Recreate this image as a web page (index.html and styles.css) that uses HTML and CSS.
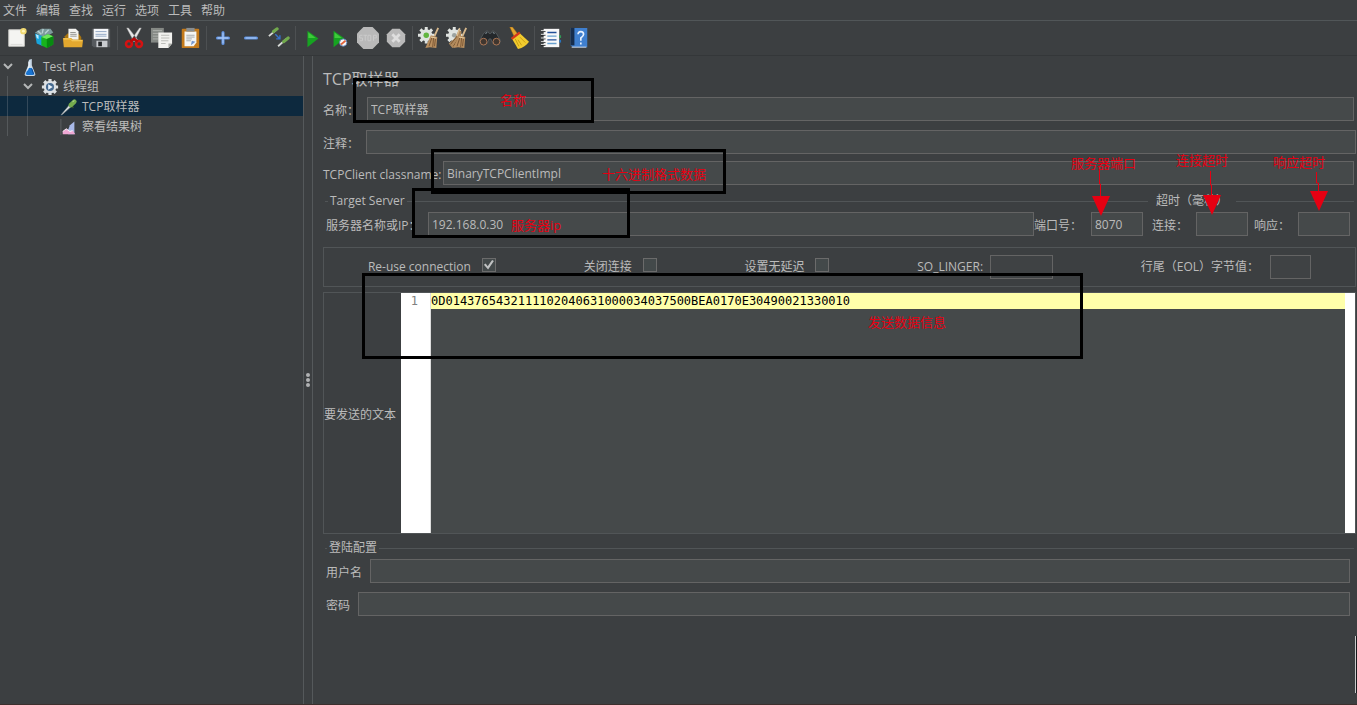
FILE: index.html
```html
<!DOCTYPE html>
<html lang="zh-CN">
<head>
<meta charset="utf-8">
<title>TCP取样器</title>
<link rel="stylesheet" href="styles.css">
</head>
<body>
<div class="app">
  <nav class="menubar">
    <button>文件</button><button>编辑</button><button>查找</button><button>运行</button><button>选项</button><button>工具</button><button>帮助</button>
  </nav>

  <div class="toolbar">
    <button aria-label="新建"><svg viewBox="0 0 24 24"><path d="M3 3h17v18H3z" fill="#f4f4f2" stroke="#cfcfcb"/><path d="M5 19h13" stroke="#dcdcd8"/><circle cx="19" cy="4.500" r="3.500" fill="#f0d870"/><circle cx="19" cy="4.500" r="1.600" fill="#fff6b8"/></svg></button>
    <button aria-label="模板"><svg viewBox="0 0 24 24"><path d="M1 6l7-4 10 0 3 4-10 6z" fill="#7d9a9c"/><path d="M4 4l4 4M10 2l-1 5M16 3l-4 4" stroke="#b8d0d4" stroke-width="1.500"/><path d="M1 7l9 3v11l-7-3z" fill="#18a4dc"/><path d="M2 8l3 1v4l-2-1z" fill="#bcecff"/><path d="M8 11l7-3 6 2v9l-7 4-6-3z" fill="#18b41c"/><path d="M8 11l7-3 6 2-7 3z" fill="#6fe65a"/><path d="M14 13l7-3v9l-7 4z" fill="#078a10"/></svg></button>
    <button aria-label="打开"><svg viewBox="0 0 24 24"><path d="M3 10l3-3h12l3 4v9H3z" fill="#a87410"/><path d="M7 2h8l3 3v9H7z" fill="#f3f3f1"/><path d="M9 6h6M9 8h7M9 10h7" stroke="#90918c"/><path d="M1 12h9l2 2h11l-1 8H2z" fill="#e3a82e"/><path d="M2 13h7l2 2h11" stroke="#f8d26a" fill="none"/></svg></button>
    <button aria-label="保存"><svg viewBox="0 0 24 24"><path d="M2 2h20v20H4l-2-2z" fill="#565a5e"/><path d="M4 2h16v11H4z" fill="#f5f7fa"/><path d="M6 5h12M6 8h12M6 10h12" stroke="#8ba3c2"/><path d="M7 15h12v7H7z" fill="#c9ccd0"/><path d="M9 16h4v5H9z" fill="#24272a"/></svg></button>
    <span class="sep"></span>
    <button aria-label="剪切"><svg viewBox="0 0 24 24"><path d="M4 1l2 0 10 13-4 2zM20 1l-2 0-9 13 3 2z" fill="#e8e8e8" stroke="#999" stroke-width=".5"/><circle cx="6.500" cy="18.500" r="3.200" fill="none" stroke="#d51212" stroke-width="2.800"/><circle cx="17.500" cy="18.500" r="3.200" fill="none" stroke="#d51212" stroke-width="2.800"/><path d="M8 16l4-3 4 3" stroke="#b80808" stroke-width="3" fill="none"/></svg></button>
    <button aria-label="复制"><svg viewBox="0 0 24 24"><path d="M0 1h14v16H0z" fill="#858985"/><path d="M2 4h10M2 7h6M2 10h6M2 13h6" stroke="#b1b3b0"/><path d="M8 6h15v12l-4 5H8z" fill="#f2f2ef"/><path d="M11 9h9M11 12h9M11 15h8M11 18h5" stroke="#b7b8b3"/><path d="M23 18h-4v5z" fill="#aaaca7"/></svg></button>
    <button aria-label="粘贴"><svg viewBox="0 0 24 24"><rect x="3" y="2" width="19" height="21" rx="1" fill="#c47a1b"/><path d="M6 5h13v12l-3 4H6z" fill="#f5f5f3"/><path d="M8 9h9M8 11h9M8 13h6M8 15h5" stroke="#a2a6aa"/><path d="M8 1h9v4H8z" fill="#888d90"/><path d="M13 20l1-5 4 1" fill="#7597cf"/></svg></button>
    <span class="sep"></span>
    <button aria-label="展开"><svg viewBox="0 0 24 24"><path d="M12 6v12M6 12h12" stroke="#5d8fdc" stroke-width="3.400" stroke-linecap="round"/><path d="M12 6v12M6 12h12" stroke="#a7c8f8" stroke-width="1.400"/></svg></button>
    <button aria-label="折叠"><svg viewBox="0 0 24 24"><path d="M6 12h12" stroke="#5d8fdc" stroke-width="3.400" stroke-linecap="round"/><path d="M6 12h12" stroke="#a7c8f8" stroke-width="1.400"/></svg></button>
    <button aria-label="切换"><svg viewBox="0 0 24 24"><path d="M1 10l8-7M11 21l9-8" stroke="#d7dbd7" stroke-width="2"/><path d="M6 5l4-3M17 16l5-4" stroke="#72a94d" stroke-width="3.400" stroke-linecap="round"/><path d="M8 8l5 5M13 9v4H9" stroke="#3872cb" stroke-width="1.500" fill="none"/></svg></button>
    <span class="sep"></span>
    <button aria-label="启动"><svg viewBox="0 0 24 24"><path d="M7 4l12 8.500L7 22z" fill="#16a321"/><path d="M8 6l8 6H8z" fill="#3fca3b"/></svg></button>
    <button aria-label="无停顿启动"><svg viewBox="0 0 24 24"><path d="M5 4l12 8.500L5 22z" fill="#16a321"/><path d="M6 6l8 6H6z" fill="#3fca3b"/><circle cx="15.500" cy="17" r="4" fill="#f7f7f7" stroke="#5979ae"/><path d="M13 19l5-4" stroke="#e2643b" stroke-width="2"/></svg></button>
    <button aria-label="停止"><svg viewBox="0 0 24 24"><path d="M7 0h10l7 7v10l-7 7H7l-7-7V7z" fill="#b9b9b9"/><path d="M6 9H3v3h3v3H3M7 9h4M9 9v6M12 9h3v6h-3zM18 15V9h3v3h-3" stroke="#cccccc" fill="none"/></svg></button>
    <button aria-label="关闭"><svg viewBox="0 0 24 24"><path d="M8 2h8l6 6v8l-6 6H8l-6-6V8z" fill="#b9b9b9"/><path d="M8 8l8 8M16 8l-8 8" stroke="#dedede" stroke-width="3"/></svg></button>
    <span class="sep"></span>
    <button aria-label="清除"><svg viewBox="0 0 24 24"><use href="#cog"/><circle cx="9" cy="9" r="3" fill="#62b640"/><use href="#brush"/></svg></button>
    <button aria-label="清除全部"><svg viewBox="0 0 24 24"><use href="#cog"/><path d="M14 3l-4 9-7 6 4 5 8-4 2-14z" fill="#b08a5d"/><path d="M12 10l-7 9M14 12l-6 9" stroke="#76522d"/><path d="M15 1l-3 9" stroke="#d8b98c" stroke-width="1.500"/><use href="#brush"/></svg></button>
    <span class="sep"></span>
    <button aria-label="查找"><svg viewBox="0 0 24 24"><path d="M5 7l4-3 2 3h2l2-3 4 3 5 9-9 2-2-5h-2l-2 5-9-2z" fill="#24282b" stroke="#5d6366" stroke-width=".8"/><circle cx="5" cy="16" r="3.700" fill="#40362f" stroke="#b47c59"/><circle cx="19" cy="16" r="3.700" fill="#40362f" stroke="#b47c59"/><path d="M7 7l2-1M15 6l2 1" stroke="#9fb0b8"/></svg></button>
    <button aria-label="重置查找"><svg viewBox="0 0 24 24"><path d="M3 0l3 0 6 8-4 3z" fill="#e2a431" stroke="#9c6510" stroke-width=".5"/><path d="M5 12l8-6 11 10q-4 6-12 8z" fill="#f1cb2d"/><path d="M12 14l4 6M14 11l6 6M9 13l4 8" stroke="#c79a12"/><path d="M5 13l9-7" stroke="#d53719" stroke-width="2.500"/></svg></button>
    <span class="sep"></span>
    <button aria-label="函数助手"><svg viewBox="0 0 24 24"><path d="M4 2h17v20H4z" fill="#f8f8f8"/><path d="M8 6h10M8 14h10" stroke="#234f98" stroke-width="1.500"/><path d="M8 10h10M8 18h10" stroke="#68a1cf" stroke-width="1.500"/><path d="M1 5h5M1 9h5M1 13h5M1 17h5M1 20h5" stroke="#1d2022"/><path d="M1 4h4M1 8h4M1 12h4M1 16h4M1 19h4" stroke="#eee"/><path d="M21 9h2v3h-2z" fill="#309956"/><path d="M21 14h2v3h-2z" fill="#2874be"/></svg></button>
    <button aria-label="帮助"><svg viewBox="0 0 24 24"><path d="M3 1h18v21H5l-2-2z" fill="#3f7fce"/><path d="M3 1h4v19H3z" fill="#162d4c"/><path d="M4 22h16" stroke="#e0e8f0"/><path d="M11 8q0-3 3-3t3 3q0 2-3 4v3M14 17v2" stroke="#e8f2ff" stroke-width="1.800" fill="none"/></svg></button>
  </div>

  <div class="workspace">
    <aside class="sidebar">
      <ul class="tree">
        <li><button class="node level-1"><svg class="chevron" viewBox="0 0 10 10"><path d="M1 2l4 4 4-4"/></svg><svg class="icon" viewBox="0 0 18 20"><path d="M8 2l3-1v7l4 10q0 2-2 2H5q-2 0-2-2l4-10V5z" fill="#c9d9e8"/><path d="M7 11h4l3 7-2 1H6l-2-1z" fill="#1974d0"/><path d="M8 4v5l-2 5" stroke="#fff" fill="none"/><path d="M11 12l2 6" stroke="#0b448f"/></svg>Test Plan</button></li>
        <li><button class="node level-2"><svg class="chevron" viewBox="0 0 10 10"><path d="M1 2l4 4 4-4"/></svg><svg class="icon" viewBox="0 0 20 20"><path d="M10 1v18M1 10h18M3.600 3.600l12.800 12.800M16.400 3.600L3.600 16.400" stroke="#dde1e4" stroke-width="3.600"/><circle cx="10" cy="10" r="7" fill="#dde1e4"/><circle cx="10" cy="10" r="4.500" fill="#466a90"/><path d="M8 7l5 3-5 3z" fill="#e8f2fa"/></svg>线程组</button></li>
        <li><button class="node level-3 selected"><svg class="icon" viewBox="0 0 20 20"><path d="M1 19l10-12 2 2-10 9z" fill="#e0e5e5" stroke="#82898c" stroke-width=".7"/><path d="M10 6l5 5" stroke="#344f2c" stroke-width="2"/><path d="M12 8l4-4" stroke="#75ac4e" stroke-width="5" stroke-linecap="round"/><path d="M14 4l2-1" stroke="#c4e4a6"/></svg>TCP取样器</button></li>
        <li><button class="node level-3"><svg class="icon" viewBox="0 0 20 20"><path d="M1 1v18" stroke="#606465" fill="none"/><path d="M9 13l2-5 5-4v14H9z" fill="#a9b9e8"/><path d="M3 18v-3l4-3 4 3 3-1 3 4z" fill="#efa8d4"/><path d="M3 15l4-3 4 3 3-1" stroke="#fff" fill="none"/></svg>察看结果树</button></li>
      </ul>
    </aside>
    <div class="splitter"><i></i><i></i><i></i></div>

    <main class="panel">
      <h1>TCP取样器</h1>
      <div class="row row-name inset"><label class="w-name" for="name">名称：</label><input id="name" value="TCP取样器"></div>
      <div class="row row-comment"><label class="w-comment" for="comment">注释：</label><input id="comment"></div>
      <div class="row row-class inset"><label class="w-class" for="classname">TCPClient classname:</label><input id="classname" value="BinaryTCPClientImpl"></div>

      <div class="servers">
        <fieldset class="target">
          <legend>Target Server</legend>
          <div class="row"><label class="w-server" for="server">服务器名称或IP：</label><input id="server" value="192.168.0.30"><label class="w-port" for="port">端口号：</label><input class="short" id="port" value="8070"></div>
        </fieldset>
        <fieldset class="timeout">
          <legend>超时（毫秒）</legend>
          <div class="row"><label class="w-name" for="connect">连接：</label><input class="short" id="connect"><label class="w-name after" for="response">响应：</label><input class="short" id="response"></div>
        </fieldset>
      </div>

      <div class="options">
        <label class="check">Re-use connection<input type="checkbox" checked></label>
        <label class="check">关闭连接<input type="checkbox"></label>
        <label class="check">设置无延迟<input type="checkbox"></label>
        <label class="check tight">SO_LINGER:<input class="linger"></label>
        <label class="check">行尾（EOL）字节值：<input class="eol"></label>
      </div>

      <div class="payload">
        <label for="payload">要发送的文本</label>
        <div class="gutter">1</div>
        <textarea id="payload" spellcheck="false">0D0143765432111102040631000034037500BEA0170E30490021330010</textarea>
        <div class="track"></div>
      </div>

      <fieldset class="login">
        <legend>登陆配置</legend>
        <div class="row"><label class="w-name" for="user">用户名</label><input id="user"></div>
        <div class="row"><label class="w-pass" for="password">密码</label><input id="password" type="password"></div>
      </fieldset>
    </main>
  </div>

  <div class="notes">
    <div class="frame frame-name"></div>
    <div class="frame frame-class"></div>
    <div class="frame frame-server"></div>
    <div class="frame frame-data"></div>
    <span class="note note-name">名称</span>
    <span class="note note-class">十六进制格式数据</span>
    <span class="note note-server">服务器ip</span>
    <span class="note note-data">发送数据信息</span>
    <span class="note note-port">服务器端口</span>
    <span class="note note-connect">连接超时</span>
    <span class="note note-response">响应超时</span>
    <svg class="arrow arrow-port" viewBox="0 0 18 46"><path d="M7.500 0v14h1v14" stroke="#e60012" fill="none"/><path d="M0 26h18L9 46z" fill="#e60012"/></svg>
    <svg class="arrow arrow-connect" viewBox="0 0 18 46"><path d="M7.500 2v14h1v12" stroke="#e60012" fill="none"/><path d="M0 26h18L9 46z" fill="#e60012"/></svg>
    <svg class="arrow arrow-response" viewBox="0 0 18 46"><path d="M6.500 7v11h2v10" stroke="#e60012" fill="none"/><path d="M0 26h18L9 46z" fill="#e60012"/></svg>
    <div class="edge-handle"></div>
  </div>
</div>

<svg class="defs" aria-hidden="true">
  <symbol id="cog" viewBox="0 0 24 24"><path d="M9 0v18M0 9h18M2.600 2.600l12.800 12.800M15.400 2.600L2.600 15.400" stroke="#dfe3e0" stroke-width="3.200"/><circle cx="9" cy="9" r="6.600" fill="#dfe3e0"/><circle cx="9" cy="9" r="2.500" fill="#9ca3a0"/></symbol>
  <symbol id="brush" viewBox="0 0 24 24"><path d="M22 1l-4 9" stroke="#d8b98c" stroke-width="2"/><path d="M14 9l7 2-1 12-7-1-5 1z" fill="#b98f5f"/><path d="M15 12l-3 9M17 12l-1 10M19 13l-1 8" stroke="#765331"/><path d="M14 11l6 1" stroke="#e8d0a5"/></symbol>
</svg>
</body>
</html>
```

FILE: styles.css
```css
* { box-sizing: border-box; }

body {
  margin: 0;
  background: #3c3f41;
  color: #bbbbbb;
  font: 12px/16px "Open Sans", "Noto Sans CJK SC", sans-serif;
}

button, input, textarea { font: inherit; color: inherit; }
button { background: none; border: 0; padding: 0; }

.defs { position: absolute; width: 0; height: 0; }

.app {
  position: relative;
  display: flex;
  flex-direction: column;
  min-height: 100vh;
  overflow: hidden;
  border-bottom: 1px solid #3d2f2d;
}

.menubar {
  display: flex;
  gap: 9px;
  height: 21px;
  padding: 1px 3px 0;
  border-bottom: 1px solid #515658;
}

.toolbar {
  display: flex;
  align-items: center;
  height: 35px;
  padding: 0 3px;
  border-bottom: 1px solid #343739;
}
.toolbar button { display: flex; justify-content: center; width: 28px; }
.toolbar svg { width: 22px; height: 22px; }
.sep { width: 1px; height: 24px; margin: 0 2px; background: #4d5052; }

.workspace { display: flex; flex: 1; }

.sidebar { width: 304px; border-right: 1px solid #55595b; }
.tree {
  list-style: none;
  margin: 0;
  padding: 0;
  background:
    linear-gradient(#55595b, #55595b) 7px 20px / 1px 60px no-repeat,
    linear-gradient(#55595b, #55595b) 27px 40px / 1px 40px no-repeat;
}
.node {
  display: flex;
  align-items: center;
  gap: 4px;
  width: 100%;
  height: 20px;
  padding: 2px 0 0 3px;
}
.level-2 { padding-left: 23px; }
.level-3 { padding-left: 60px; }
.selected {
  background:
    linear-gradient(#34495a, #34495a) 7px 0 / 1px 20px no-repeat,
    linear-gradient(#34495a, #34495a) 27px 0 / 1px 20px no-repeat,
    #0d293e;
}
.icon { width: 18px; height: 18px; }
.level-1 .icon, .level-2 .icon { margin-left: 4px; }
.chevron { width: 10px; height: 10px; fill: none; stroke: #b4b6b7; stroke-width: 2; }

.splitter {
  display: flex;
  flex-direction: column;
  align-items: center;
  justify-content: center;
  gap: 1px;
  width: 9px;
  border-right: 1px solid #55595b;
}
.splitter i { width: 4px; height: 4px; border-radius: 2px; background: #b0b2b3; }

.panel { flex: 1; min-width: 0; padding: 11px 1px 16px 10px; }

h1 { margin: 0; font-size: 16px; line-height: 24px; font-weight: 400; }

.row { display: flex; align-items: center; height: 24px; }
.row input { flex: 1; }
.row label { padding-top: 3px; }
.inset { margin-right: 2px; }
.row-name { margin-top: 6px; }
.row-comment { margin-top: 9px; }
.row-class { margin-top: 7px; }

label { flex: none; white-space: nowrap; }
.w-name { width: 44px; }
.w-comment { width: 43px; }
.w-class { width: 120px; }
.w-server { width: 102px; overflow: hidden; }
.w-port { width: 57px; }
.w-pass { width: 32px; }
.after { margin-left: 6px; }

input {
  min-width: 0;
  height: 24px;
  margin: 0;
  padding: 0 3px;
  background: #45494a;
  border: 1px solid #646464;
  outline: 0;
}
.row .short { flex: none; width: 52px; }

fieldset {
  min-width: 0;
  margin: 0;
  padding: 0;
  border: 0;
  border-top: 1px solid #515557;
}
legend { margin-left: 3px; padding: 0 2px; height: 16px; }

.servers { display: flex; margin: 8px 2px 0; }
.servers .row { margin-top: 3px; }
.target { flex: 1; }
.target .row { padding: 0 5px 0 1px; }
.timeout { width: 206px; }
.timeout legend { margin-left: 0; padding: 0 8px; }
.timeout .row { padding: 0 4px; }

.options {
  display: flex;
  justify-content: space-around;
  align-items: center;
  height: 40px;
  margin-top: 11px;
  border: 1px solid #515557;
}
.check { display: flex; align-items: center; gap: 11px; }
.tight { gap: 7px; }
.linger, .eol { background: #3f4244; }
.linger { width: 63px; }
.eol { width: 41px; }

input[type="checkbox"] {
  appearance: none;
  display: grid;
  place-items: center;
  width: 14px;
  height: 14px;
  margin-bottom: 4px;
  padding: 0;
  background: #43494a;
  border-color: #6b6b6b;
}
input[type="checkbox"]:checked::before {
  content: "";
  width: 10px;
  height: 10px;
  background: #c0c2c3;
  clip-path: polygon(0 48%, 18% 36%, 38% 62%, 82% 0, 100% 10%, 42% 95%);
}

.payload {
  display: flex;
  height: 242px;
  margin-top: 5px;
  border: 1px solid #515557;
}
.payload label { align-self: center; width: 77px; padding-top: 3px; }
.gutter, .payload textarea {
  font-family: "DejaVu Sans Mono", monospace;
  line-height: 16px;
}
.gutter {
  width: 30px;
  padding-right: 12px;
  background: #ffffff;
  border-right: 1px solid #dddddd;
  color: #808080;
  text-align: right;
}
.payload textarea {
  flex: 1;
  min-width: 0;
  margin: 0;
  padding: 0;
  border: 0;
  outline: 0;
  resize: none;
  color: #000000;
  background: linear-gradient(#ffffaa, #ffffaa) 0 0 / 100% 16px no-repeat #45494a;
}
.track { width: 10px; background: #ffffff; }

.login { margin: 6px 2px 0; }
.login legend { margin-left: 2px; }
.login .row { margin: 3px 4px 0 1px; }
.login .row + .row { margin-top: 9px; }

/* Annotations drawn over the form */
.notes { position: absolute; inset: 0; pointer-events: none; }
.frame { position: absolute; border: 3px solid #000000; }
.frame-name { left: 353px; top: 78px; width: 241px; height: 45px; }
.frame-class { left: 431px; top: 149px; width: 295px; height: 45px; }
.frame-server { left: 412px; top: 188px; width: 218px; height: 50px; }
.frame-data { left: 362px; top: 273px; width: 721px; height: 86px; }

.note { position: absolute; font-size: 13px; color: #e60012; white-space: nowrap; }
.note-name { left: 500px; top: 92px; }
.note-class { left: 602px; top: 166px; }
.note-server { left: 511px; top: 217px; }
.note-data { left: 868px; top: 314px; }
.note-port { right: 221px; top: 155px; }
.note-connect { right: 129px; top: 152px; }
.note-response { right: 32px; top: 154px; }

.arrow { position: absolute; width: 18px; height: 46px; }
.arrow-port { right: 247px; top: 170px; }
.arrow-connect { right: 136px; top: 169px; }
.arrow-response { right: 29px; top: 165px; }

.edge-handle {
  position: absolute;
  right: 0;
  bottom: 11px;
  width: 2px;
  height: 57px;
  background: #16191b;
  border-left: 1px solid #c8c9ca;
}
```
